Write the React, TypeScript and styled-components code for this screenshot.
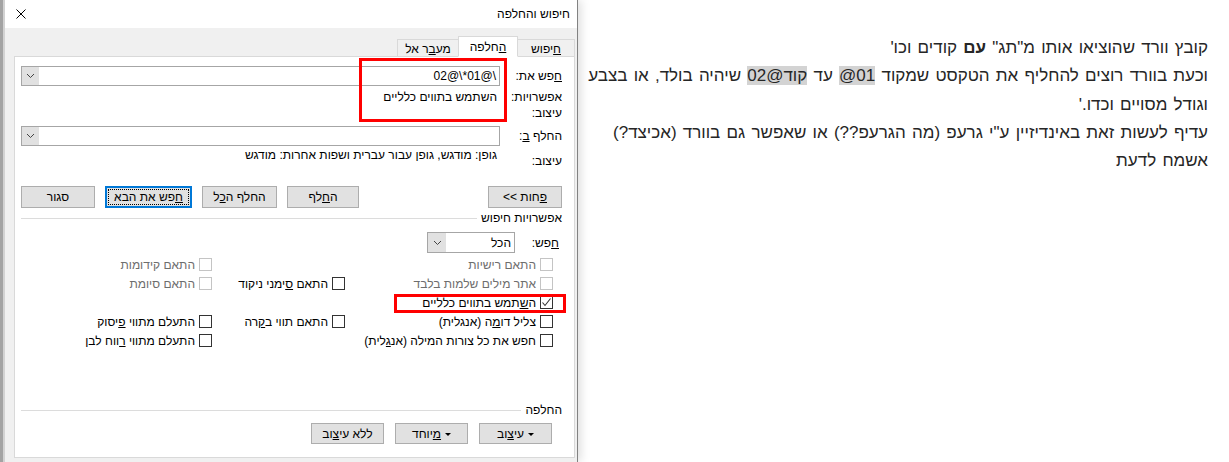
import React from 'react';
import styled, { createGlobalStyle } from 'styled-components';

const Global = createGlobalStyle`
  html, body { margin: 0; padding: 0; background: #fff; }
  body { font-family: "Liberation Sans", Arial, sans-serif; }
  * { box-sizing: border-box; }
`;

const Page = styled.div`
  display: flex;
  width: 1229px;
  height: 462px;
  overflow: hidden;
  background: #fff;
`;

const Dialog = styled.div`
  flex: 0 0 578px;
  height: 462px;
  display: flex;
  flex-direction: column;
  border-left: 3px solid #a3a3a3;
  border-right: 1px solid #828282;
  box-shadow: 3px 0 9px rgba(0, 0, 0, 0.13);
  position: relative;
  z-index: 1;
  background: #f0f0f0;
  direction: rtl;
  font-size: 12px;
  color: #000;
`;

const Window = styled.div`
  flex: 1;
  display: flex;
  flex-direction: column;
  border-left: 2px solid #d2d2d2;
  min-height: 0;
`;

const TitleBar = styled.div`
  height: 28px;
  flex: none;
  background: #fff;
  display: flex;
  align-items: center;
  justify-content: space-between;
  padding: 0 7px 0 11px;
`;

const Title = styled.div`
  font-size: 12px;
  color: #000;
`;

const CloseBtn = styled.div`
  width: 10px;
  height: 10px;
  display: flex;
`;

const TabStrip = styled.div`
  height: 28px;
  flex: none;
  display: flex;
  align-items: flex-end;
  padding-right: 2px;
`;

const Tab = styled.div<{ $active?: boolean; $w: number }>`
  width: ${p => p.$w + (p.$active ? 2 : 0)}px;
  height: ${p => (p.$active ? 21 : 18)}px;
  margin: 0 ${p => (p.$active ? -1 : 0)}px -1px;
  display: flex;
  align-items: center;
  justify-content: center;
  background: ${p => (p.$active ? '#fff' : '#f0f0f0')};
  border: 1px solid #d9d9d9;
  border-bottom: ${p => (p.$active ? '1px solid #fff' : '1px solid #d9d9d9')};
  position: relative;
  z-index: ${p => (p.$active ? 2 : 1)};
  padding-top: ${p => (p.$active ? 0 : 1)}px;
  white-space: nowrap;
`;

const Panel = styled.div`
  position: relative;
  flex: 1;
  margin: 0 2px 4px 9px;
  background: #fff;
  border: 1px solid #d9d9d9;
  padding: 9px 12px 13px 6px;
  display: flex;
  flex-direction: column;
`;

const Row = styled.div<{ $h: number; $mt?: number }>`
  height: ${p => p.$h}px;
  margin-top: ${p => p.$mt ?? 0}px;
  display: flex;
  align-items: center;
  flex: none;
`;

const Label = styled.div<{ $w?: number; $pt?: number; $pr?: number }>`
  width: ${p => p.$w ?? 62}px;
  flex: none;
  white-space: nowrap;
  line-height: 14px;
  padding-top: ${p => p.$pt ?? 0}px;
  padding-right: ${p => p.$pr ?? 0}px;
  align-self: ${p => (p.$pt ? 'flex-start' : 'center')};
`;

const Value = styled.div<{ $top?: boolean }>`
  flex: 1;
  padding-right: 3px;
  white-space: nowrap;
  line-height: 14px;
  align-self: ${p => (p.$top ? 'flex-start' : 'center')};
`;

const Combo = styled.div`
  flex: 1;
  height: 20px;
  border: 1px solid #a6a6a6;
  display: flex;
  align-items: stretch;
  background: #fff;
`;

const ComboText = styled.div`
  flex: 1;
  padding-right: 3px;
  display: flex;
  align-items: center;
  white-space: nowrap;
`;

const DropBtn = styled.div<{ $w?: number }>`
  width: ${p => p.$w ?? 17}px;
  flex: none;
  background: #e1e1e1;
  display: flex;
  align-items: center;
  justify-content: center;
`;

const ButtonRow = styled.div<{ $mt: number; $pr?: number; $gap?: number }>`
  display: flex;
  align-items: center;
  gap: ${p => p.$gap ?? 10}px;
  margin-top: ${p => p.$mt}px;
  padding-right: ${p => p.$pr ?? 0}px;
  flex: none;
`;

const Spacer = styled.div`
  flex: 1;
`;

const Button = styled.div<{ $w: number; $focused?: boolean; $h?: number }>`
  width: ${p => p.$w}px;
  height: ${p => p.$h ?? 22}px;
  flex: none;
  background: #e1e1e1;
  border: ${p => (p.$focused ? '2px solid #0078d7' : '1px solid #adadad')};
  display: flex;
  align-items: center;
  justify-content: center;
  gap: 4px;
  white-space: nowrap;
  position: relative;
  &::after {
    content: '';
    display: ${p => (p.$focused ? 'block' : 'none')};
    position: absolute;
    inset: 1px;
    border: 1px dotted #000;
  }
`;

const Caret = styled.span`
  width: 0;
  height: 0;
  border-left: 3px solid transparent;
  border-right: 3px solid transparent;
  border-top: 3px solid #000;
  margin-top: 1px;
`;

const SectionHead = styled.div<{ $mt: number }>`
  display: flex;
  align-items: center;
  height: 14px;
  margin-top: ${p => p.$mt}px;
  flex: none;
  white-space: nowrap;
  &::after {
    content: '';
    flex: 1;
    border-top: 1px solid #dcdcdc;
    margin-right: 4px;
  }
`;

const Select = styled.div`
  width: 88px;
  height: 21px;
  border: 1px solid #a6a6a6;
  display: flex;
  background: #fff;
`;

const CheckGrid = styled.div`
  display: grid;
  grid-template-columns: 208px 133px 1fr;
  grid-template-rows: repeat(5, 19px);
  padding-right: 9px;
  margin-top: 2px;
  flex: none;
`;

const CheckItem = styled.div<{ $disabled?: boolean; $col: number; $row: number }>`
  grid-column: ${p => p.$col};
  grid-row: ${p => p.$row};
  display: flex;
  align-items: center;
  gap: 4px;
  white-space: nowrap;
  color: ${p => (p.$disabled ? '#6d6d6d' : '#000')};
`;

const Box = styled.span<{ $disabled?: boolean }>`
  width: 13px;
  height: 13px;
  flex: none;
  border: 1px solid ${p => (p.$disabled ? '#c4c4c4' : '#333')};
  background: #fff;
  display: flex;
  align-items: center;
  justify-content: center;
`;

const Annotation = styled.div<{ $l: number; $t: number; $w: number; $h: number }>`
  position: absolute;
  left: ${p => p.$l}px;
  top: ${p => p.$t}px;
  width: ${p => p.$w}px;
  height: ${p => p.$h}px;
  border: 3px solid #f00;
  pointer-events: none;
`;

const Doc = styled.div`
  flex: 1;
  min-width: 0;
  overflow: hidden;
  direction: rtl;
  padding: 34px 21px 0 0;
  font-family: "Liberation Sans", Arial, sans-serif;
  font-size: 17px;
  line-height: 28.3px;
  word-spacing: 1.5px;
  color: #262626;
`;

const Line = styled.div`
  white-space: nowrap;
`;

const Mark = styled.span`
  background: #d3d3d3;
`;

const Chevron = () => (
  <svg width="9" height="6" viewBox="0 0 9 6">
    <polyline points="1,1 4.5,4.5 8,1" fill="none" stroke="#444" strokeWidth="1" />
  </svg>
);

const Check = () => (
  <svg width="11" height="11" viewBox="0 0 11 11">
    <polyline points="1.5,5.5 4,8.5 9.5,1.5" fill="none" stroke="#333" strokeWidth="1.1" />
  </svg>
);

type CB = { col: number; row: number; text: React.ReactNode; disabled?: boolean; checked?: boolean };

const checks: CB[] = [
  { col: 1, row: 1, text: 'התאם רישיות', disabled: true },
  { col: 3, row: 1, text: 'התאם קידומות', disabled: true },
  { col: 1, row: 2, text: 'אתר מילים שלמות בלבד', disabled: true },
  { col: 2, row: 2, text: <>התאם <u>ס</u>ימני ניקוד</> },
  { col: 3, row: 2, text: 'התאם סיומת', disabled: true },
  { col: 1, row: 3, text: <>ה<u>ש</u>תמש בתווים כלליים</>, checked: true },
  { col: 1, row: 4, text: <>צליל דו<u>מ</u>ה (אנגלית)</> },
  { col: 2, row: 4, text: <>התאם תווי ב<u>ק</u>רה</> },
  { col: 3, row: 4, text: <>התעלם מתווי <u>פ</u>יסוק</> },
  { col: 1, row: 5, text: <>חפש את כל צורות המילה (אנ<u>ג</u>לית)</> },
  { col: 3, row: 5, text: <>התעלם מתווי <u>ר</u>ווח לבן</> },
];

export default function App() {
  return (
    <Page>
      <Global />
      <Dialog>
        <Window>
          <TitleBar>
            <Title>חיפוש והחלפה</Title>
            <CloseBtn>
              <svg width="10" height="10" viewBox="0 0 10 10">
                <path d="M0.5 0.5 L9.5 9.5 M9.5 0.5 L0.5 9.5" stroke="#000" strokeWidth="1" />
              </svg>
            </CloseBtn>
          </TitleBar>
          <TabStrip>
            <Tab $w={58}><span><u>ח</u>יפוש</span></Tab>
            <Tab $w={58} $active><span><u>ה</u>חלפה</span></Tab>
            <Tab $w={62}><span>מע<u>ב</u>ר אל</span></Tab>
          </TabStrip>
          <Panel>
            <Row $h={20}>
              <Label><u>ח</u>פש את:</Label>
              <Combo>
                <ComboText>\@01*\@02</ComboText>
                <DropBtn><Chevron /></DropBtn>
              </Combo>
            </Row>
            <Row $h={16} $mt={3}>
              <Label>אפשרויות:</Label>
              <Value>השתמש בתווים כלליים</Value>
            </Row>
            <Row $h={16}>
              <Label>עיצוב:</Label>
              <Value />
            </Row>
            <Row $h={20} $mt={5}>
              <Label>החלף <u>ב</u>:</Label>
              <Combo>
                <ComboText />
                <DropBtn><Chevron /></DropBtn>
              </Combo>
            </Row>
            <Row $h={20} $mt={2}>
              <Label $pt={6}>עיצוב:</Label>
              <Value $top>גופן: מודגש, גופן עבור עברית ושפות אחרות: מודגש</Value>
            </Row>
            <ButtonRow $mt={18}>
              <Button $w={74}><span><u>פ</u>חות &gt;&gt;</span></Button>
              <Spacer />
              <Button $w={72}><span>ה<u>ח</u>לף</span></Button>
              <Button $w={75}><span>החלף ה<u>כ</u>ל</span></Button>
              <Button $w={87} $focused><span><u>ח</u>פש את הבא</span></Button>
              <Button $w={74}><span>סגור</span></Button>
            </ButtonRow>
            <SectionHead $mt={3}>אפשרויות חיפוש</SectionHead>
            <Row $h={21} $mt={7}>
              <Label $w={47} $pr={3}><u>ח</u>פש:</Label>
              <Select>
                <ComboText>הכל</ComboText>
                <DropBtn $w={18}><Chevron /></DropBtn>
              </Select>
            </Row>
            <CheckGrid>
              {checks.map((c, i) => (
                <CheckItem key={i} $col={c.col} $row={c.row} $disabled={c.disabled}>
                  <Box $disabled={c.disabled}>{c.checked && <Check />}</Box>
                  <span>{c.text}</span>
                </CheckItem>
              ))}
            </CheckGrid>
            <Spacer />
            <SectionHead $mt={0}>החלפה</SectionHead>
            <ButtonRow $mt={6} $pr={10} $gap={11}>
              <Button $w={73} $h={21}><Caret /><span>עי<u>צ</u>וב</span></Button>
              <Button $w={73} $h={21}><Caret /><span><u>מ</u>יוחד</span></Button>
              <Button $w={73} $h={21}><span>ללא עי<u>צ</u>וב</span></Button>
            </ButtonRow>
            <Annotation $l={344} $t={1} $w={148} $h={64} />
            <Annotation $l={379} $t={237} $w={172} $h={19} />
          </Panel>
        </Window>
      </Dialog>
      <Doc>
        <Line>קובץ וורד שהוציאו אותו מ"תג" <b>עם</b> קודים וכו'</Line>
        <Line>
          וכעת בוורד רוצים להחליף את הטקסט שמקוד <Mark>01@</Mark> עד <Mark>קוד@02</Mark> שיהיה בולד, או בצבע
        </Line>
        <Line>וגודל מסויים וכדו.'</Line>
        <Line>עדיף לעשות זאת באינדיזיין ע"י גרעפ (מה הגרעפ??) או שאפשר גם בוורד (אכיצד?)</Line>
        <Line>אשמח לדעת</Line>
      </Doc>
    </Page>
  );
}
